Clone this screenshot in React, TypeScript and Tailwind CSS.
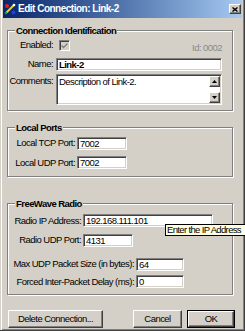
import React from "react";

const sunken =
  "bg-white border border-t-[#808080] border-l-[#808080] border-b-white border-r-white shadow-[inset_1px_1px_0_#404040,inset_-1px_-1px_0_#d4d0c8]";
const raised =
  "bg-[#d4d0c8] border border-t-white border-l-white border-b-[#404040] border-r-[#404040] shadow-[inset_-1px_-1px_0_#808080]";

function Input({ value, w, bold }: { value: string; w: string; bold?: boolean }) {
  return (
    <div className={`${sunken} ${w} h-[13px] flex items-center pl-[2px] ${bold ? "font-bold" : ""}`}>
      <span className="leading-[11px] whitespace-nowrap">{value}</span>
    </div>
  );
}

function Group({ title, className, children }: { title: string; className: string; children: React.ReactNode }) {
  return (
    <div
      className={`ml-[7px] w-[226px] flex flex-col border border-[#808080] shadow-[inset_1px_1px_0_#fff,1px_1px_0_#fff] ${className}`}
    >
      <span className="-mt-[6px] ml-[7px] self-start px-[1px] bg-[#d4d0c8] font-bold leading-[11px] h-[11px] whitespace-nowrap">
        {title}
      </span>
      {children}
    </div>
  );
}

function Arrow({ up }: { up?: boolean }) {
  return (
    <svg width="5" height="3" viewBox="0 0 5 3">
      {up ? <polygon points="2.5,0 5,3 0,3" fill="#000" /> : <polygon points="0,0 5,0 2.5,3" fill="#000" />}
    </svg>
  );
}

export default function App() {
  return (
    <div className="relative w-[245px] h-[331px] overflow-hidden bg-[#d4d0c8] font-['Liberation_Sans',Arial,sans-serif] text-[9.5px] tracking-[-0.55px] text-black shadow-[inset_-1px_-1px_0_#404040,inset_1px_0_0_#d4d0c8,inset_2px_0_0_#fff,inset_-2px_-2px_0_#808080]">
      {/* Title bar */}
      <div className="mx-[3px] h-[18px] flex items-center bg-gradient-to-r from-[#0a246a] to-[#a6caf0] pr-[1px]">
        <svg width="12" height="12" viewBox="0 0 12 12" className="ml-[1px]">
          <line x1="2" y1="10" x2="10" y2="2" stroke="#f5d000" strokeWidth="2" />
          <circle cx="3" cy="3" r="2" fill="#e02020" />
          <circle cx="9.5" cy="9.5" r="2" fill="#2040e0" />
          <circle cx="2" cy="10" r="1.3" fill="#20a020" />
          <circle cx="10" cy="2" r="1.3" fill="#ffffff" />
        </svg>
        <span className="ml-[2px] text-[10px] tracking-[-0.5px] font-bold text-white leading-[12px]">
          Edit Connection: Link-2
        </span>
        <div className={`ml-auto w-[12px] h-[10px] flex items-center justify-center ${raised}`}>
          <svg width="6" height="5" viewBox="0 0 6 5">
            <path d="M0.5 0.5 L5.5 4.5 M5.5 0.5 L0.5 4.5" stroke="#000" strokeWidth="1.4" />
          </svg>
        </div>
      </div>

      {/* Connection Identification */}
      <Group title="Connection Identification" className="mt-[12px] pb-[5px]">
        <div className="mt-[4px] h-[11px] flex items-center">
          <span className="w-[45px] text-right">Enabled:</span>
          <div className="ml-[6px] w-[11px] h-[11px] flex items-center justify-center bg-[#d4d0c8] border border-t-[#808080] border-l-[#808080] border-b-white border-r-white shadow-[inset_1px_1px_0_#404040]">
            <svg width="7" height="6" viewBox="0 0 7 6">
              <path d="M0.5 2.5 L2.5 4.5 L6.5 0.5" stroke="#808080" strokeWidth="1.3" fill="none" />
            </svg>
          </div>
          <span className="ml-auto mr-[10px] mt-[5px] text-[#8a8a8a]">Id: 0002</span>
        </div>
        <div className="mt-[6px] flex items-center">
          <span className="w-[45px] text-right">Name:</span>
          <div className="ml-[3px]">
            <Input value="Link-2" w="w-[166px]" bold />
          </div>
        </div>
        <div className="mt-[3px] flex items-start">
          <span className="w-[45px] text-right leading-[11px] mt-[1px]">Comments:</span>
          <div className={`ml-[3px] w-[166px] h-[31px] flex ${sunken}`}>
            <span className="flex-1 pl-[2px] pt-[1px] leading-[11px] whitespace-nowrap">Description of Link-2.</span>
            <div className="w-[11px] mt-[1px] mr-[1px] h-[27px] flex flex-col justify-between bg-white">
              <div className={`h-[11px] flex items-center justify-center ${raised}`}>
                <Arrow up />
              </div>
              <div className={`h-[11px] flex items-center justify-center ${raised}`}>
                <Arrow />
              </div>
            </div>
          </div>
        </div>
      </Group>

      {/* Local Ports */}
      <Group title="Local Ports" className="mt-[16px] pb-[6px]">
        <div className="mt-[3px] flex items-center">
          <span className="w-[67px] text-right">Local TCP Port:</span>
          <div className="ml-[2px]">
            <Input value="7002" w="w-[50px]" />
          </div>
        </div>
        <div className="mt-[5px] flex items-center">
          <span className="w-[67px] text-right">Local UDP Port:</span>
          <div className="ml-[2px]">
            <Input value="7002" w="w-[50px]" />
          </div>
        </div>
      </Group>

      {/* FreeWave Radio */}
      <Group title="FreeWave Radio" className="mt-[26px] pb-[5px]">
        <div className="relative mt-[5px] flex items-center">
          <span className="w-[73px] text-right">Radio IP Address:</span>
          <div className="ml-[2px]">
            <Input value="192.168.111.101" w="w-[130px]" />
          </div>
          <div className="absolute left-[157px] top-[10px] z-10 h-[12px] pl-[1px] pr-[6px] flex items-center bg-[#ffffe1] border border-black whitespace-nowrap leading-[10px] tracking-[-0.65px]">
            Enter the IP Address
          </div>
        </div>
        <div className="mt-[5px] flex items-center">
          <span className="w-[73px] text-right">Radio UDP Port:</span>
          <div className="ml-[2px]">
            <Input value="4131" w="w-[50px]" />
          </div>
        </div>
        <div className="mt-[10px] flex items-center">
          <span className="w-[126px] text-right whitespace-nowrap">Max UDP Packet Size (in bytes):</span>
          <div className="ml-[2px]">
            <Input value="64" w="w-[48px]" />
          </div>
        </div>
        <div className="mt-[3px] flex items-center">
          <span className="w-[126px] text-right whitespace-nowrap">Forced Inter-Packet Delay (ms):</span>
          <div className="ml-[2px]">
            <Input value="0" w="w-[48px]" />
          </div>
        </div>
      </Group>

      {/* Buttons */}
      <div className="mt-[15px] h-[18px] flex">
        <div className={`ml-[8px] w-[95px] h-[18px] flex items-center justify-center ${raised}`}>
          Delete Connection...
        </div>
        <div className={`ml-auto w-[49px] h-[18px] flex items-center justify-center ${raised}`}>Cancel</div>
        <div className="ml-[5px] mr-[10px] w-[48px] h-[18px] border border-black flex">
          <div className={`flex-1 flex items-center justify-center ${raised}`}>OK</div>
        </div>
      </div>
    </div>
  );
}
